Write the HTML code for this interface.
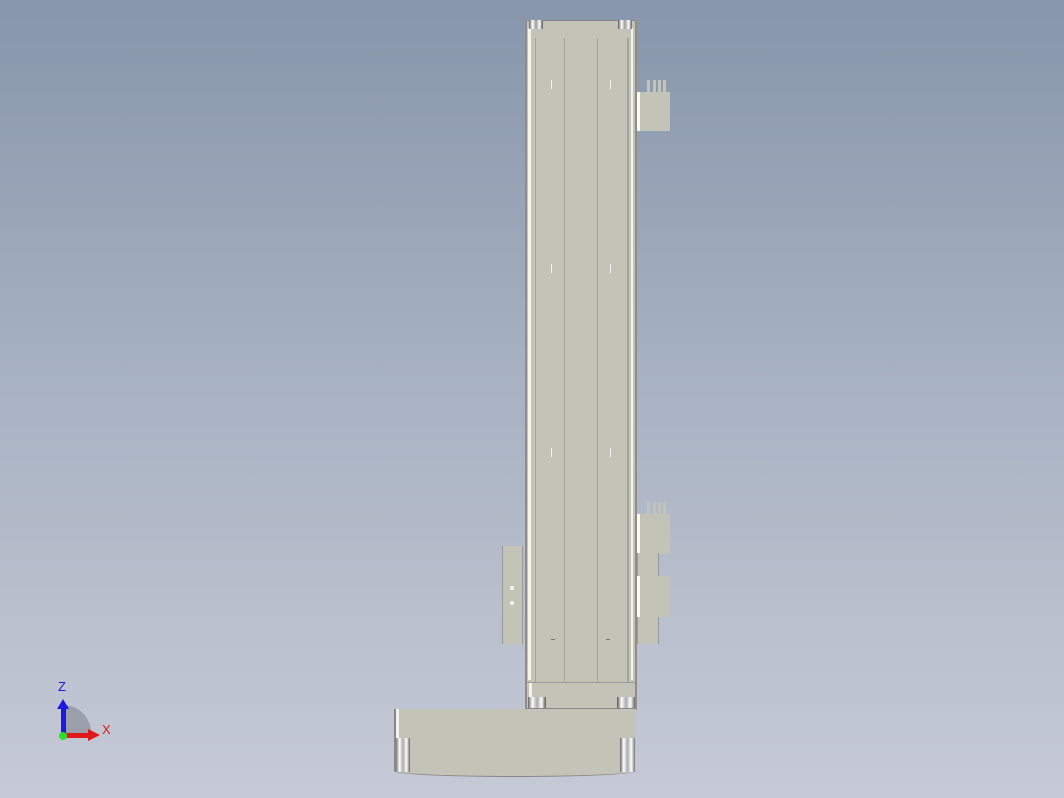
<!DOCTYPE html>
<html><head><style>
body{margin:0;width:1064px;height:798px;overflow:hidden;background:linear-gradient(#8796ab,#a9b3c3 50%,#c6cad6);position:relative;font-family:"Liberation Sans",sans-serif}
div{position:absolute;box-sizing:border-box}
.p{background:#c3c3b8}
.l{background:#a4a49a}
.w{background:#f4f4ee}
</style></head><body>
<!-- main rail -->
<div class="p" style="left:525px;top:20px;width:112px;height:690px;border-left:2px solid #8e8e86;border-right:2px solid #8e8e86"></div>
<div class="w" style="left:528px;top:28px;width:3px;height:652px"></div>
<div class="l" style="left:535px;top:38px;width:1px;height:645px"></div>
<div class="l" style="left:564px;top:38px;width:1px;height:645px"></div>
<div class="l" style="left:597px;top:38px;width:1px;height:645px"></div>
<div class="l" style="left:627px;top:38px;width:2px;height:645px"></div>
<div class="w" style="left:631px;top:28px;width:2px;height:652px"></div>
<!-- top cap -->
<div style="left:527px;top:20px;width:108px;height:1px;background:#888"></div>
<div style="left:529px;top:20px;width:14px;height:9px;background:linear-gradient(90deg,#666,#fff,#999,#fff,#555)"></div>
<div style="left:618px;top:20px;width:14px;height:9px;background:linear-gradient(90deg,#555,#fff,#999,#fff,#666)"></div>
<!-- marks -->
<div class="w" style="left:551px;top:80px;width:1px;height:9px"></div>
<div class="w" style="left:610px;top:80px;width:1px;height:9px"></div>
<div class="w" style="left:551px;top:264px;width:1px;height:9px"></div>
<div class="w" style="left:610px;top:264px;width:1px;height:9px"></div>
<div class="w" style="left:551px;top:448px;width:1px;height:9px"></div>
<div class="w" style="left:610px;top:448px;width:1px;height:9px"></div>
<div style="left:551px;top:639px;width:4px;height:1px;background:#777"></div>
<div style="left:606px;top:639px;width:4px;height:1px;background:#777"></div>
<!-- bottom cap -->
<div class="p" style="left:527px;top:682px;width:108px;height:27px;border-top:1px solid #999;border-bottom:1px solid #888"></div>
<div class="w" style="left:529px;top:683px;width:3px;height:15px"></div>
<div style="left:528px;top:697px;width:18px;height:11px;background:linear-gradient(90deg,#666,#fff,#aaa,#fff,#555)"></div>
<div style="left:617px;top:697px;width:18px;height:11px;background:linear-gradient(90deg,#555,#fff,#aaa,#fff,#666)"></div>
<!-- top right connector -->
<div class="p" style="left:637px;top:92px;width:33px;height:39px;border-left:3px solid #fafaf4"></div>
<div class="p" style="left:647px;top:80px;width:3px;height:13px"></div>
<div class="p" style="left:653px;top:80px;width:3px;height:13px"></div>
<div class="p" style="left:658px;top:80px;width:3px;height:13px"></div>
<div class="p" style="left:663px;top:80px;width:3px;height:13px"></div>
<!-- lower right -->
<div class="p" style="left:637px;top:514px;width:33px;height:40px;border-left:3px solid #fafaf4"></div>
<div class="p" style="left:647px;top:502px;width:3px;height:13px"></div>
<div class="p" style="left:653px;top:502px;width:3px;height:13px"></div>
<div class="p" style="left:658px;top:502px;width:3px;height:13px"></div>
<div class="p" style="left:663px;top:502px;width:3px;height:13px"></div>
<div class="p" style="left:637px;top:553px;width:22px;height:91px;border-right:1px solid #999;border-left:1px solid #999"></div>
<div class="p" style="left:637px;top:576px;width:33px;height:41px;border-left:3px solid #fafaf4"></div>
<div class="p" style="left:652px;top:566px;width:6px;height:12px"></div>
<!-- left bracket -->
<div class="p" style="left:502px;top:546px;width:21px;height:98px;border-left:1px solid #999;border-right:1px solid #999"></div>
<div class="w" style="left:510px;top:586px;width:4px;height:4px;border-radius:2px"></div>
<div class="w" style="left:510px;top:601px;width:4px;height:4px;border-radius:2px"></div>
<!-- base -->
<div class="p" style="left:394px;top:709px;width:242px;height:68px;border-left:2px solid #888;border-radius:0 0 50% 50%/0 0 6px 6px;border-bottom:1px solid #888"></div>
<div class="w" style="left:396px;top:709px;width:3px;height:40px"></div>
<div style="left:396px;top:738px;width:14px;height:34px;background:linear-gradient(90deg,#777,#fff,#aaa,#fff,#666)"></div>
<div style="left:620px;top:738px;width:15px;height:34px;background:linear-gradient(90deg,#666,#fff,#aaa,#fff,#777)"></div>
<!-- axis -->
<svg style="position:absolute;left:50px;top:675px" width="70" height="70">
<path d="M13 60 L13 30 A28 28 0 0 1 41 60 Z" fill="#8a8e97" opacity=".7"/>
<rect x="11" y="33" width="5" height="28" fill="#1a1ae0"/>
<polygon points="7,34 13,24 19,34" fill="#1a1ae0"/>
<rect x="13" y="58" width="26" height="5" fill="#e01a1a"/>
<polygon points="38,54 50,60 38,66" fill="#e01a1a"/>
<circle cx="13" cy="61" r="4" fill="#2adf2a"/>
<text x="8" y="16" font-size="13" fill="#1a1ae0" font-family="Liberation Sans">Z</text>
<text x="52" y="59" font-size="13" fill="#e01a1a" font-family="Liberation Sans">X</text>
</svg>
</body></html>
